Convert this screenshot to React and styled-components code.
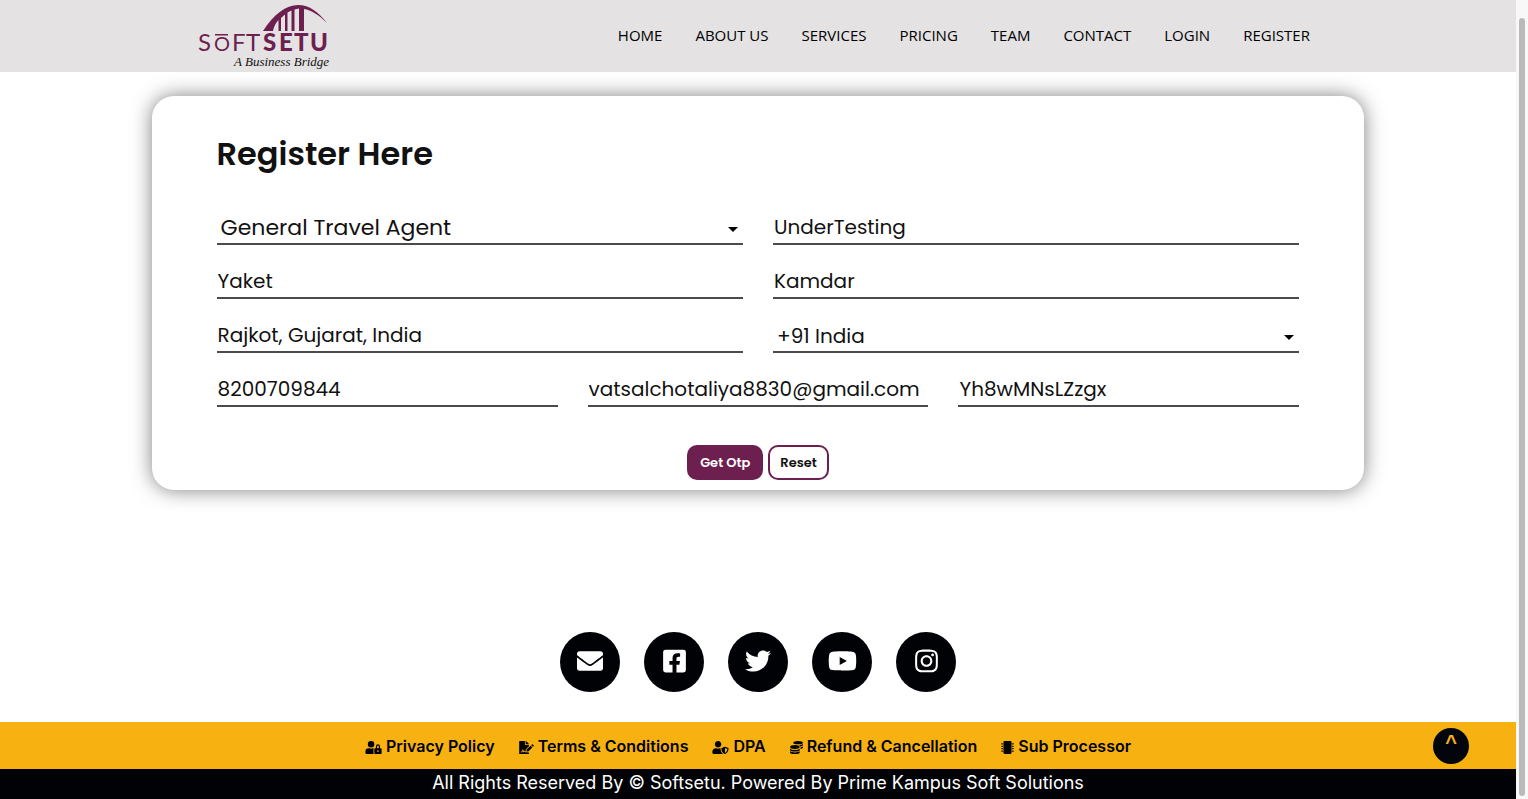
import React from "react";
import styled, { createGlobalStyle } from "styled-components";
import {
  FaEnvelope, FaFacebookSquare, FaTwitter, FaYoutube, FaInstagram,
  FaUserLock, FaFileSignature, FaUserShield, FaCoins, FaMicrochip,
} from "react-icons/fa";

const plum = "#6d1f4f";
const display = `Poppins, Inter, "Liberation Sans", sans-serif`;

const GlobalStyle = createGlobalStyle`
  * { box-sizing: border-box; }
  body { margin: 0; background: #fff; color: #111; font-family: Inter, "Liberation Sans", sans-serif; }
  a { color: inherit; text-decoration: none; }
`;

const Shell = styled.div`
  display: flex;
  min-height: 100vh;
`;

const Page = styled.div`
  flex: 1;
  min-width: 0;
  display: flex;
  flex-direction: column;
`;

const ScrollTrack = styled.div`
  width: 12px;
  padding: 18px 3px 3px;
  background: #f8f8f8;
  display: flex;
`;

const ScrollThumb = styled.div`
  flex: 1;
  border-radius: 3px;
  background: #bababa;
`;

const Header = styled.header`
  height: 72px;
  padding: 0 13%;
  display: flex;
  align-items: center;
  justify-content: space-between;
  background: #e4e2e3;
`;

const Brand = styled.a`
  display: flex;
`;

const Nav = styled.nav`
  display: flex;
  gap: 33px;
  padding: 0 9px 2px 0;
`;

const NavLink = styled.a`
  font: 400 15px/24px "Open Sans", "Noto Sans", sans-serif;
  color: #000;
  white-space: nowrap;
`;

const Main = styled.main`
  flex: 1;
  padding: 24px 10% 48px;
`;

const Card = styled.form`
  padding: 36px 65px 10px;
  border-radius: 22px;
  background: #fff;
  box-shadow: 0 0 20px rgba(0, 0, 0, 0.5);
`;

const Title = styled.h1`
  margin: 0 0 35px;
  font: 600 32px/44px ${display};
`;

const Row = styled.div`
  display: grid;
  grid-template-columns: repeat(${(p) => p.$columns}, minmax(0, 1fr));
  gap: 30px;
  margin-bottom: 20px;
`;

const Field = styled.div`
  position: relative;
  height: 34px;
  border-bottom: 2px solid #4b4b4d;
`;

const Input = styled.input`
  display: block;
  width: 100%;
  height: 32px;
  padding: 0 1px;
  border: 0;
  outline: 0;
  background: transparent;
  color: #111;
  font: 400 20px/32px ${display};
`;

const Select = styled.select`
  display: block;
  width: 100%;
  height: 32px;
  padding: 1px 24px 0 4px;
  border: 0;
  outline: 0;
  appearance: none;
  background: transparent;
  color: #111;
  font: 400 ${(p) => (p.$large ? 22 : 20)}px/32px ${display};
`;

const Caret = styled.svg`
  position: absolute;
  right: 5px;
  top: 16px;
  pointer-events: none;
`;

const Actions = styled.div`
  display: flex;
  justify-content: center;
  gap: 5px;
  padding-top: 18px;
`;

const Button = styled.button`
  height: 35px;
  padding: 0 ${(p) => (p.$solid ? 11 : 10)}px;
  border: 2px solid ${plum};
  border-radius: 10px;
  background: ${(p) => (p.$solid ? plum : "#fff")};
  color: ${(p) => (p.$solid ? "#fff" : "#111")};
  font: 600 13px/20px ${display};
`;

const Socials = styled.div`
  display: flex;
  justify-content: center;
  gap: 24px;
  padding-bottom: 30px;
`;

const SocialLink = styled.a`
  width: 60px;
  height: 60px;
  padding-bottom: 2px;
  border-radius: 50%;
  display: flex;
  align-items: center;
  justify-content: center;
  background: #010205;
  color: #fff;
  font-size: 26px;

  svg { width: ${(p) => p.$iconWidth}px; }
`;

const Policies = styled.div`
  position: relative;
  height: 47px;
  padding-right: 20px;
  display: flex;
  align-items: center;
  justify-content: center;
  gap: 24px;
  background: #f7b211;
`;

const PolicyLink = styled.a`
  display: flex;
  align-items: center;
  gap: 4px;
  color: #010205;
  font-size: 16px;
  line-height: 24px;
  font-weight: 600;
  white-space: nowrap;

  svg { width: ${(p) => p.$iconWidth}px; font-size: 13px; margin-top: 3px; }
`;

const TopButton = styled.button`
  position: absolute;
  right: 47px;
  top: 6px;
  width: 36px;
  height: 36px;
  padding: 0 0 8px;
  border: 0;
  border-radius: 50%;
  background: #02060c;
  color: #f7b211;
  font: 700 20px/28px "Liberation Sans", sans-serif;
`;

const Copyright = styled.footer`
  height: 30px;
  background: #010205;
  color: #fff;
  font-size: 18px;
  line-height: 28px;
  text-align: center;
`;

const Logo = () => (
  <svg width="134" height="72" viewBox="0 0 134 72" role="img" aria-label="Softsetu, A Business Bridge">
    <path
      d="M66 31 C77 14 89 5 101 5 C113 5 121 12 130 23 C122 15 114 10 107 9 V31 H102 V8.500 L97.500 9.500 V31 H94.500 V10.500 L90.500 12.500 V31 H88 V14.500 L84 18 V31 H81.500 V20 Q77 25 76 31 Z"
      fill={plum}
    />
    <g fill={plum} fontFamily="Lato, sans-serif" fontSize="24">
      <text x="1" y="51">S</text>
      <text x="17" y="51" fontSize="20">O</text>
      <text x="35" y="51">F</text>
      <text x="49" y="51">T</text>
      <g fontWeight="900">
        <text x="66" y="51">S</text>
        <text x="82" y="51">E</text>
        <text x="97" y="51">T</text>
        <text x="113" y="51">U</text>
      </g>
      <rect x="18" y="34" width="13" height="1.500" />
    </g>
    <text x="37" y="66" fontFamily="'Monotype Corsiva', 'Liberation Serif', serif" fontStyle="italic" fontSize="13" fill="#111">A Business Bridge</text>
  </svg>
);

const Arrow = () => (
  <Caret width="10" height="6" viewBox="0 0 10 6" aria-hidden="true">
    <path d="M0 0 H10 L5 5 Z" fill="#000" />
  </Caret>
);

const TextField = ({ label, ...rest }) => (
  <Field><Input aria-label={label} {...rest} /></Field>
);

const SelectField = ({ label, option, large }) => (
  <Field>
    <Select aria-label={label} $large={large}><option>{option}</option></Select>
    <Arrow />
  </Field>
);

const navItems = ["HOME", "ABOUT US", "SERVICES", "PRICING", "TEAM", "CONTACT", "LOGIN", "REGISTER"];
const socials = [
  ["Email", FaEnvelope, 26], ["Facebook", FaFacebookSquare, 23], ["Twitter", FaTwitter, 26],
  ["YouTube", FaYoutube, 29], ["Instagram", FaInstagram, 23],
];
const policies = [
  ["Privacy Policy", FaUserLock, 17], ["Terms & Conditions", FaFileSignature, 15], ["DPA", FaUserShield, 17],
  ["Refund & Cancellation", FaCoins, 13], ["Sub Processor", FaMicrochip, 13],
];

export default function App() {
  return (
    <Shell>
      <GlobalStyle />
      <Page>
        <Header>
          <Brand href="#home"><Logo /></Brand>
          <Nav>{navItems.map((n) => <NavLink key={n} href="#">{n}</NavLink>)}</Nav>
        </Header>
        <Main>
          <Card onSubmit={(e) => e.preventDefault()}>
            <Title>Register Here</Title>
            <Row $columns={2}>
              <SelectField label="Business type" option="General Travel Agent" large />
              <TextField label="Company name" defaultValue="UnderTesting" />
            </Row>
            <Row $columns={2}>
              <TextField label="First name" defaultValue="Yaket" />
              <TextField label="Last name" defaultValue="Kamdar" />
            </Row>
            <Row $columns={2}>
              <TextField label="City" defaultValue="Rajkot, Gujarat, India" />
              <SelectField label="Country code" option="+91 India" />
            </Row>
            <Row $columns={3}>
              <TextField label="Mobile number" type="tel" defaultValue="8200709844" />
              <TextField label="Email" type="email" defaultValue="vatsalchotaliya8830@gmail.com" />
              <TextField label="Password" defaultValue="Yh8wMNsLZzgx" />
            </Row>
            <Actions>
              <Button type="submit" $solid>Get Otp</Button>
              <Button type="reset">Reset</Button>
            </Actions>
          </Card>
        </Main>
        <Socials>
          {socials.map(([name, Icon, width]) => (
            <SocialLink key={name} href="#" aria-label={name} $iconWidth={width}><Icon /></SocialLink>
          ))}
        </Socials>
        <Policies>
          {policies.map(([name, Icon, width]) => (
            <PolicyLink key={name} href="#" $iconWidth={width}><Icon />{name}</PolicyLink>
          ))}
          <TopButton type="button" aria-label="Back to top">^</TopButton>
        </Policies>
        <Copyright>All Rights Reserved By © Softsetu. Powered By Prime Kampus Soft Solutions</Copyright>
      </Page>
      <ScrollTrack aria-hidden="true"><ScrollThumb /></ScrollTrack>
    </Shell>
  );
}
